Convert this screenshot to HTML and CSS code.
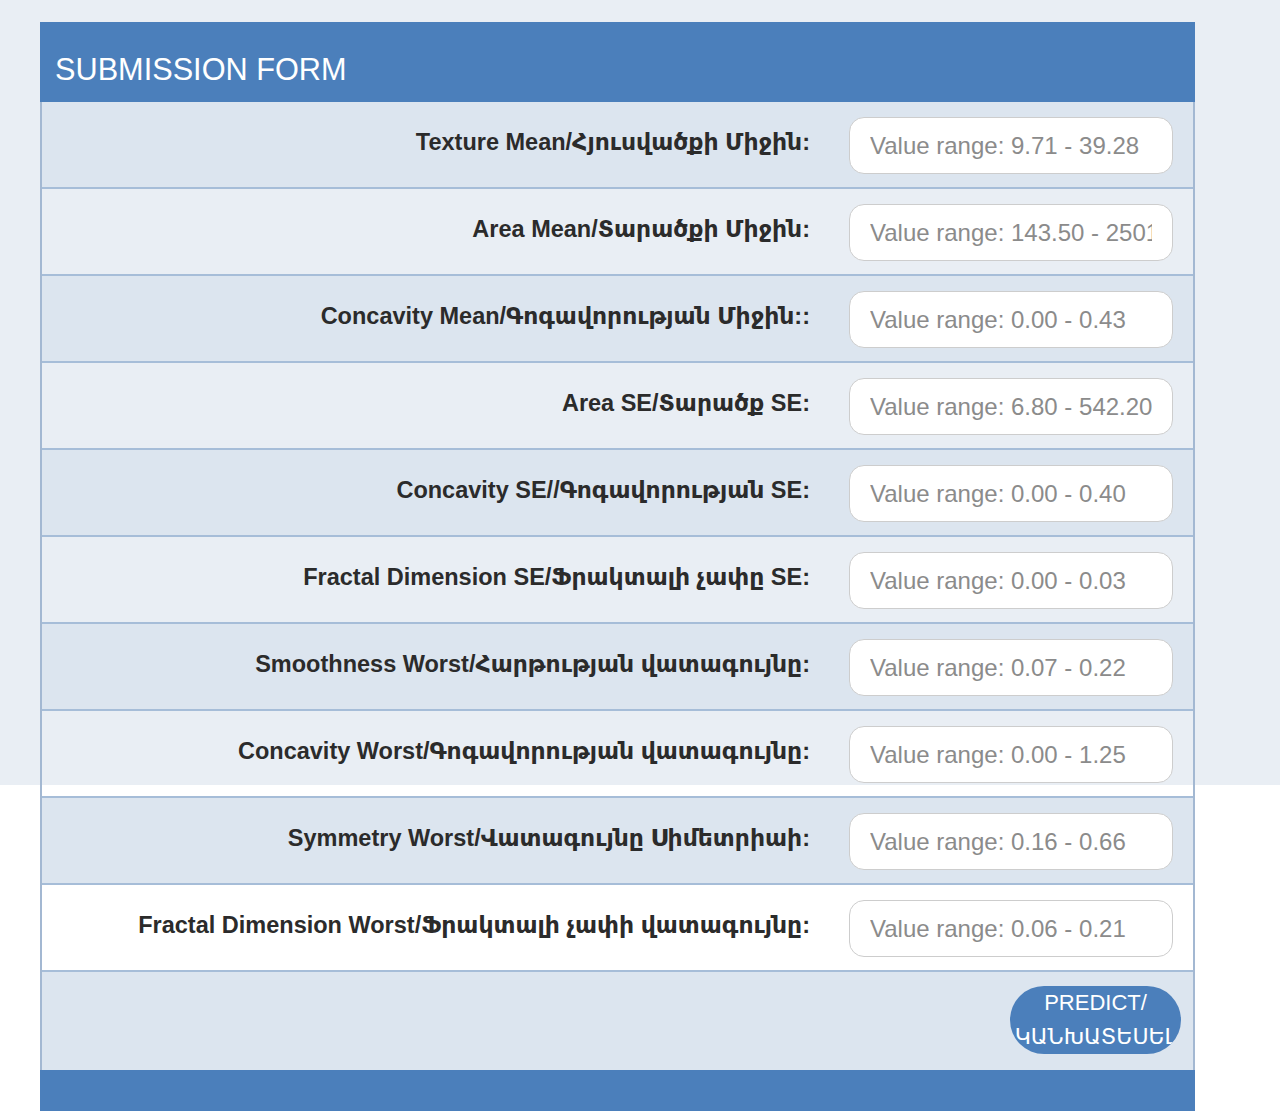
FILE: index.html
```html
<!DOCTYPE html>
<html lang="hy">
<head>
<meta charset="utf-8">
<title>Submission Form</title>
<link rel="stylesheet" href="styles.css">
</head>
<body>
<form class="form">
  <div class="form-header">SUBMISSION FORM</div>
  <div class="row shaded">
    <label class="label">Texture Mean/Հյուսվածքի Միջին:</label>
    <input class="field" type="text" placeholder="Value range: 9.71 - 39.28">
  </div>
  <div class="row">
    <label class="label">Area Mean/Տարածքի Միջին:</label>
    <input class="field" type="text" placeholder="Value range: 143.50 - 2501.00">
  </div>
  <div class="row shaded">
    <label class="label">Concavity Mean/Գոգավորության Միջին::</label>
    <input class="field" type="text" placeholder="Value range: 0.00 - 0.43">
  </div>
  <div class="row">
    <label class="label">Area SE/Տարածք SE:</label>
    <input class="field" type="text" placeholder="Value range: 6.80 - 542.20">
  </div>
  <div class="row shaded">
    <label class="label">Concavity SE//Գոգավորության SE:</label>
    <input class="field" type="text" placeholder="Value range: 0.00 - 0.40">
  </div>
  <div class="row">
    <label class="label">Fractal Dimension SE/Ֆրակտալի չափը SE:</label>
    <input class="field" type="text" placeholder="Value range: 0.00 - 0.03">
  </div>
  <div class="row shaded">
    <label class="label">Smoothness Worst/Հարթության վատագույնը:</label>
    <input class="field" type="text" placeholder="Value range: 0.07 - 0.22">
  </div>
  <div class="row">
    <label class="label">Concavity Worst/Գոգավորության վատագույնը:</label>
    <input class="field" type="text" placeholder="Value range: 0.00 - 1.25">
  </div>
  <div class="row shaded">
    <label class="label">Symmetry Worst/Վատագույնը Սիմետրիաի:</label>
    <input class="field" type="text" placeholder="Value range: 0.16 - 0.66">
  </div>
  <div class="row">
    <label class="label">Fractal Dimension Worst/Ֆրակտալի չափի վատագույնը:</label>
    <input class="field" type="text" placeholder="Value range: 0.06 - 0.21">
  </div>
  <div class="actions">
    <button class="predict" type="button">PREDICT/ ԿԱՆԽԱՏԵՍԵԼ</button>
  </div>
  <div class="form-footer"></div>
</form>
</body>
</html>
```
FILE: styles.css
```css
* {
  box-sizing: border-box;
}

html {
  background: linear-gradient(to bottom, #e9eef4 0, #e9eef4 785px, #ffffff 785px, #ffffff 100%);
  min-height: 100%;
}

body {
  margin: 0;
  padding: 22px 0 0 40px;
  font-family: "Liberation Sans", "DejaVu Sans", sans-serif;
}

.form {
  width: 1155px;
  margin: 0;
  border-left: 2px solid #a3b8d2;
  border-right: 2px solid #a3b8d2;
}

.form-header {
  height: 80px;
  margin: 0 -2px;
  padding: 31px 15px 0;
  background: #4b7fbb;
  color: #ffffff;
  font-size: 30.7px;
  line-height: 34px;
}

.row {
  display: flex;
  justify-content: flex-end;
  align-items: center;
  gap: 39px;
  height: 87px;
  padding: 2px 20px 0 0;
  border-bottom: 2px solid #a6bdd8;
}

.row.shaded {
  background: #dce5ef;
}

.label {
  font-size: 23.5px;
  line-height: 26px;
  font-weight: bold;
  color: #2b2b2b;
  text-align: right;
  margin-bottom: 8px;
}

.field {
  width: 324px;
  height: 57px;
  padding: 0 20px;
  border: 1.5px solid #cdcdcd;
  border-radius: 15px;
  background: #ffffff;
  font-family: "Liberation Sans", "DejaVu Sans", sans-serif;
  font-size: 24px;
  color: #333333;
  outline: none;
}

.field::placeholder {
  color: #8b8b8b;
  opacity: 1;
}

.actions {
  display: flex;
  justify-content: flex-end;
  height: 98px;
  padding: 14px 12px 0 0;
  background: #dce5ef;
}

.predict {
  width: 171px;
  height: 68px;
  padding: 0;
  border: none;
  border-radius: 34px;
  background: #4b7fbb;
  color: #ffffff;
  font-family: "Liberation Sans", "DejaVu Sans", sans-serif;
  font-size: 22px;
  line-height: 34px;
  text-align: center;
  overflow: hidden;
  white-space: normal;
}

.form-footer {
  height: 41px;
  margin: 0 -2px;
  background: #4b7fbb;
}
```
